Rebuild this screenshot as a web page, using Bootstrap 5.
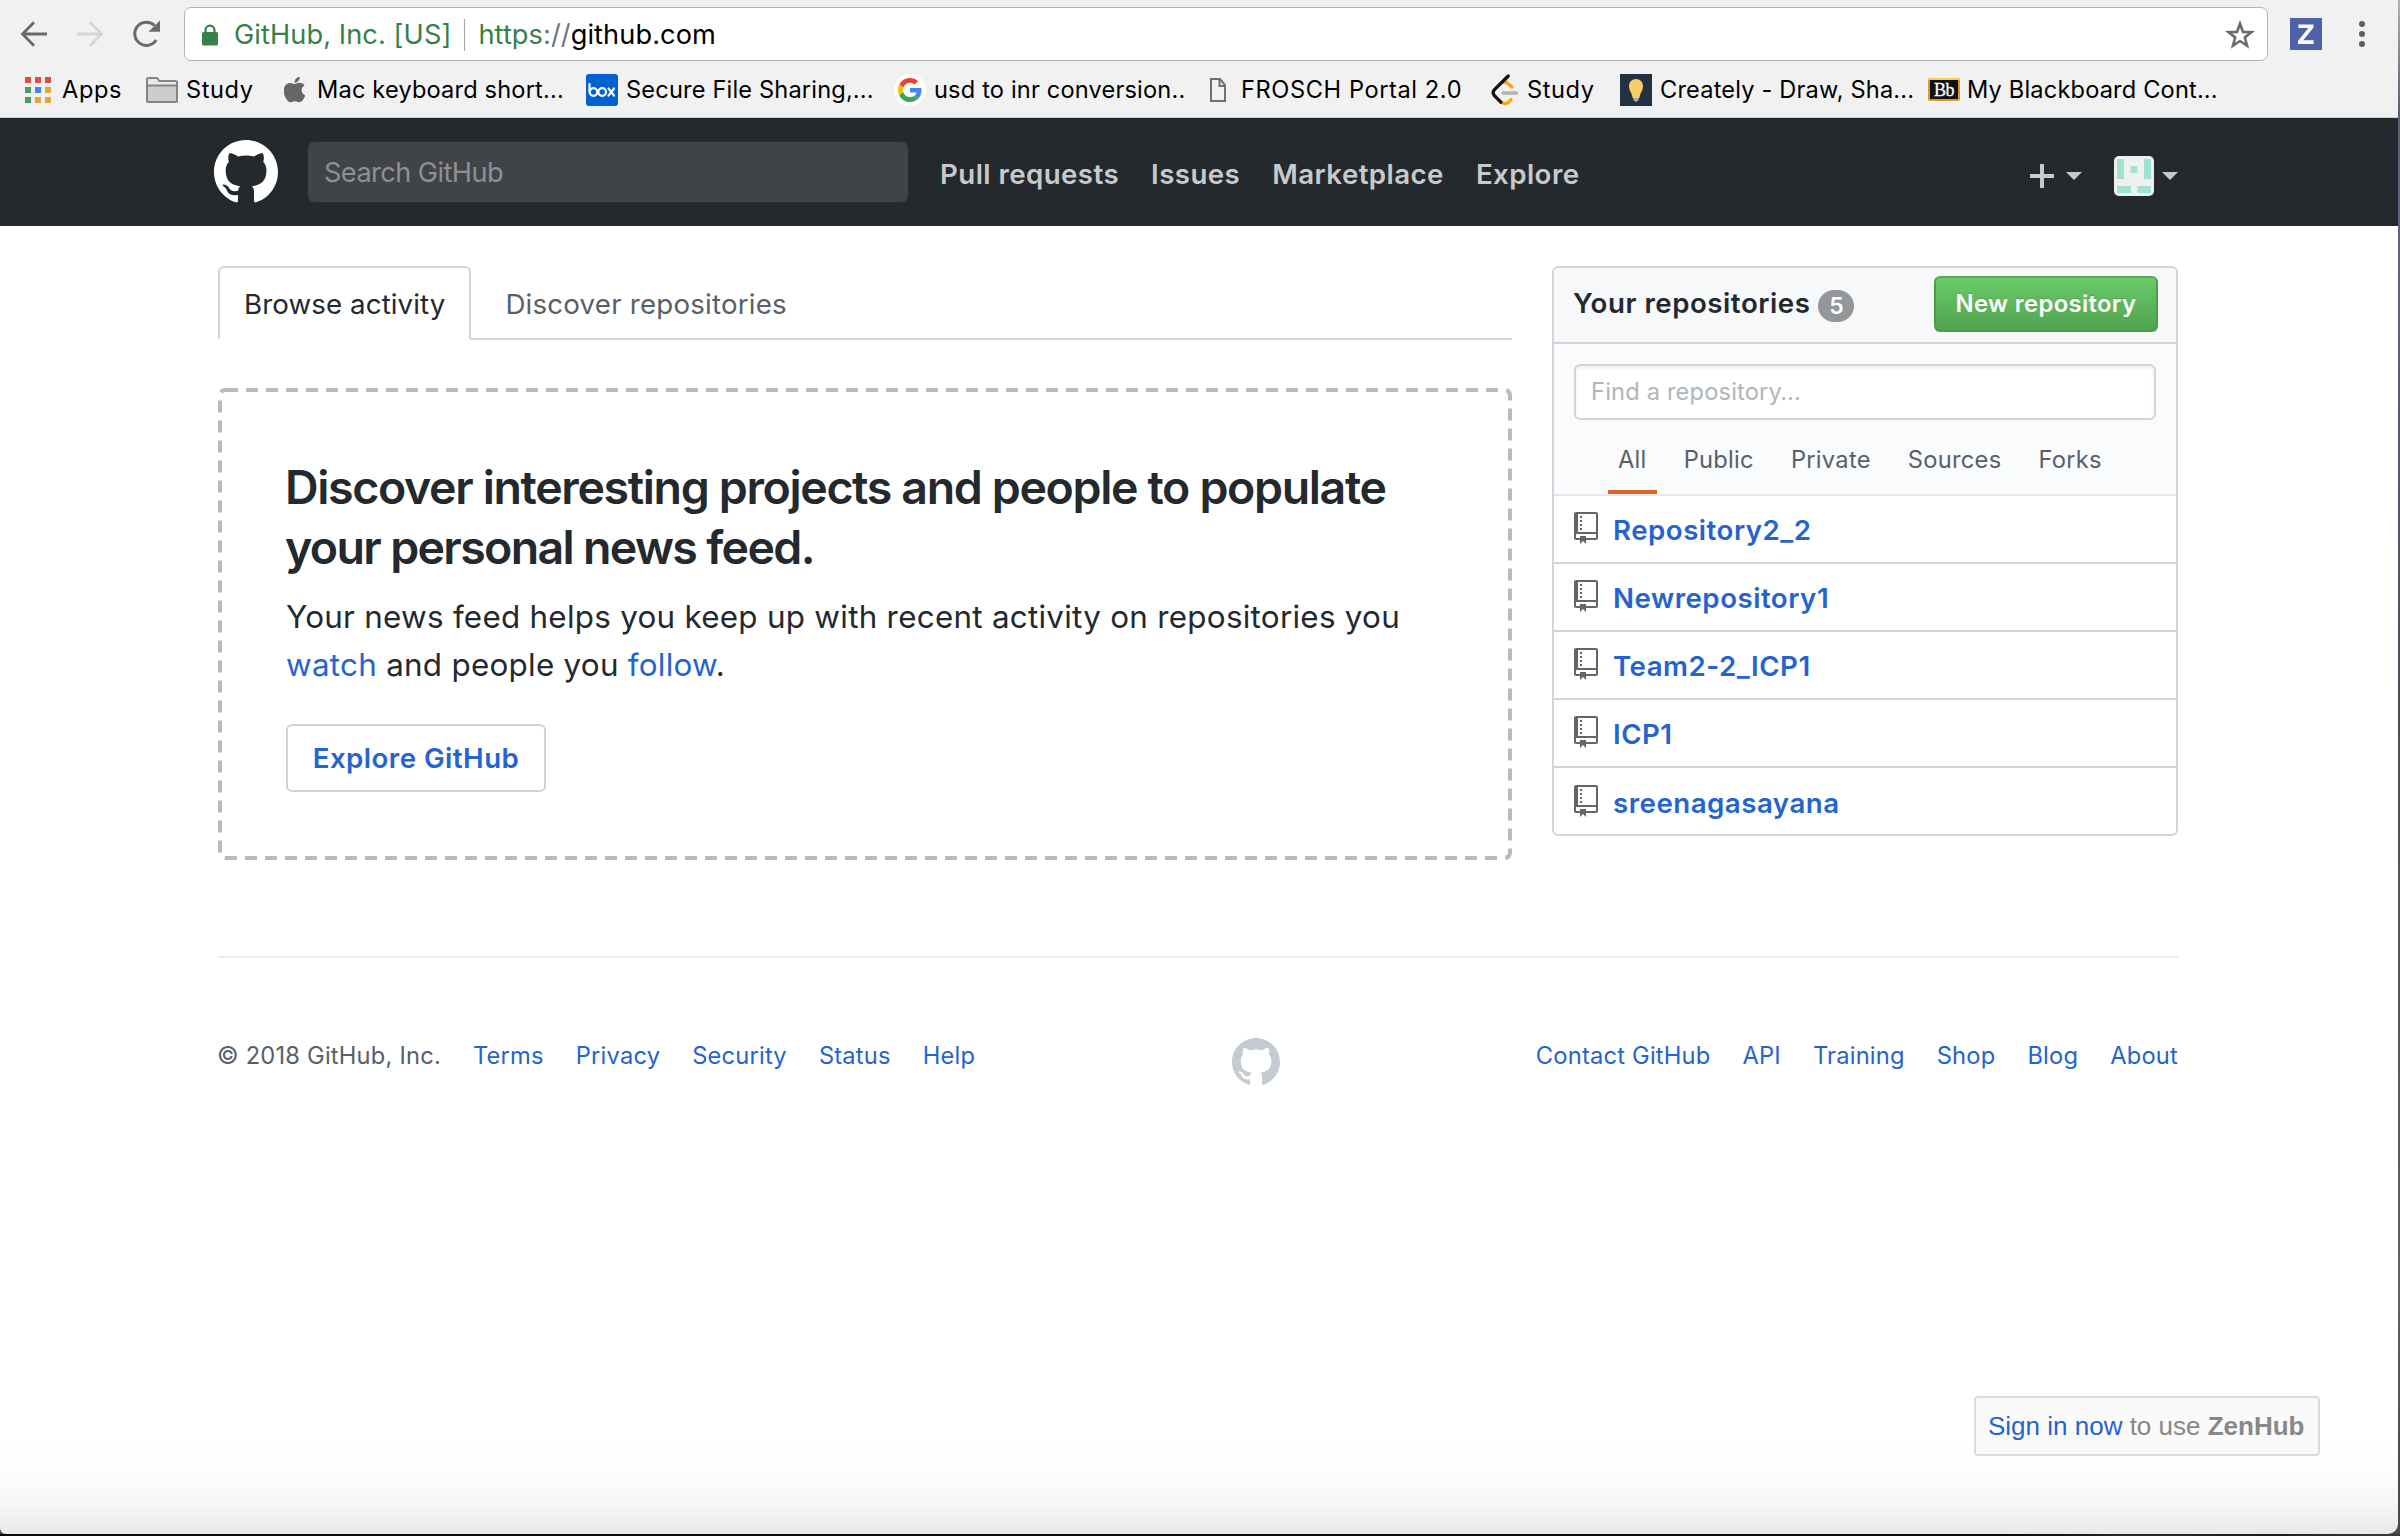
<!DOCTYPE html>
<html lang="en">
<head>
<meta charset="utf-8">
<title>GitHub</title>
<link href="https://cdn.jsdelivr.net/npm/bootstrap@5.3.0/dist/css/bootstrap.min.css" rel="stylesheet">
<script src="https://cdn.jsdelivr.net/npm/bootstrap@5.3.0/dist/js/bootstrap.bundle.min.js"></script>
<style>
html { font-size: 16px; }
body { width: 2400px; height: 1536px; overflow: hidden; background: linear-gradient(#aab3ba 0, #56606f 110px, #5c6684 230px, #4a4f5c 700px, #66605a 1300px, #4a4a4b 1480px); font-family: Inter, "Liberation Sans", sans-serif; font-size: 27.7px; line-height: 1.5; color: #24292e; }
a { color: #2563d1; text-decoration: none; }
svg { display: block; flex: none; }
.window { width: 2398px; height: 1534px; background: #fff linear-gradient(#fff 1440px, #fdfdfd 1470px, #f6f6f6 1505px, #e9e9e9 1534px); border-radius: 0 0 10px 6px; overflow: hidden; position: relative; }
.under-edge { height: 2px; background: linear-gradient(90deg, #0b0b0b 2000px, #17181b 2070px, #2e241a 2120px, #241e18 2280px, #3a3a3c 2390px); }

/* browser toolbar */
.chrome-bar { height: 118px; background: #f1f1f1; border-bottom: 1px solid #c4cfcc; }
.toolbar-row { height: 68px; padding-left: 20px; }
.btn-reload { margin: 0 22px 0 2px; }
.omnibox { width: 2084px; height: 54px; background: #fff; border: 1px solid #b4b4b4; border-radius: 7px; padding: 2px 12px 0 17px; font-size: 27.2px; letter-spacing: .08px; }
.url-sep { width: 1px; height: 32px; background: #a5a5a5; margin: 0 13px; }
.secure { color: #378047; }
.ext { margin-left: 22px; }
.dots { margin-left: 36px; }
.bookmarks { display: grid; grid-template-columns: 121px 138px 302px 308px 316px 281px 129px 308px auto; padding-left: 25px; height: 43px; font-size: 23.6px; letter-spacing: .17px; color: #000; white-space: nowrap; }
.bookmarks > div { display: flex; align-items: center; }
.bookmarks svg { margin-right: 8px; }
.bookmarks span { padding-top: 1px; }
.bookmarks .bm-wide { letter-spacing: .6px; margin-left: 1px; }
.bookmarks .bm-short { letter-spacing: .6px; }

/* site header */
.site-head { height: 108px; background: #24292e; padding-left: 214px; padding-right: 220px; }
.search-box { width: 600px; height: 60px; margin-left: 30px; border: 0; border-radius: 6px; background: #404448; padding: 0 16px; font-size: 27.2px; letter-spacing: -.58px; color: #fff; box-shadow: none; }
.search-box::placeholder { color: #8e9093; opacity: 1; }
.head-nav { margin-left: 32px; gap: 32px; font-weight: 600; letter-spacing: .42px; color: #c8c9cb; padding-top: 5px; }
.head-nav a { color: inherit; }
.tri { width: 0; height: 0; border: 8px solid transparent; border-bottom: 0; border-top-color: #c5c7c9; }
.head-tools { padding-top: 8px; }
.tri.t1 { margin: 0 32px 0 12px; }
.tri.t2 { margin-left: 8px; }

/* page body */
.page-col { width: 1960px; margin: 40px 0 0 218px; }
.feed { width: 1294px; }
.nav-tabs.feed-tabs { height: 74px; border-bottom: 2px solid #d1d5da; letter-spacing: .2px; }
.feed-tabs .nav-link { height: 74px; border-width: 2px; border-radius: 6px 6px 0 0; margin-bottom: -2px; padding: 0 24px; line-height: 73px; color: #586069; }
.feed-tabs .nav-link.active { border-color: #d1d5da; border-bottom-color: #fff; color: #24292e; letter-spacing: .1px; }
.feed-tabs .nav-link:not(.active) { padding-left: 32px; border-color: transparent; }
.blankslate { width: 1294px; height: 472px; margin-top: 48px; padding: 69px 60px 0 69px; position: relative; }
.blankslate > svg { position: absolute; left: 0; top: 0; }
.blankslate h1 { font-size: 46.5px; font-weight: 600; line-height: 60px; letter-spacing: -1.36px; margin: 0 0 16px -2px; white-space: nowrap; }
.blankslate h1 .l2 { letter-spacing: -1.66px; }
.blankslate p { font-size: 31.4px; line-height: 48px; letter-spacing: .26px; margin: 0 0 35px -1px; white-space: nowrap; }
.btn.btn-explore { width: 260px; height: 68px; margin-left: -1px; padding: 0; border: 2px solid #d0d1d3; border-radius: 6px; background: #fff; color: #2563d1; font-size: 27.7px; font-weight: 600; letter-spacing: .45px; line-height: 64px; }

/* repository list */
.card.repo-box { width: 626px; border: 2px solid #d1d5da; border-radius: 6px; overflow: hidden; }
.repo-box .card-header { height: 76px; background: #f6f8fa; border-bottom: 2px solid #d1d5da; padding: 0 18px 2px 19px; }
.repo-title { font-weight: 600; letter-spacing: .52px; }
.badge.count { width: 36px; height: 32px; border-radius: 16px; background: #93979c; font-size: 23px; font-weight: 600; padding: 4px 0 0; line-height: 24px; margin: 4px 0 0 8px; }
.btn.btn-new { width: 224px; height: 56px; padding: 0; border: 2px solid #4b9c4c; border-top-color: #58ab55; border-radius: 6px; background: linear-gradient(#69cb67, #51a351); color: #fff; font-size: 23.8px; font-weight: 600; letter-spacing: .35px; line-height: 51px; text-shadow: 0 -1px 0 rgba(0,0,0,.15); }
.filters { height: 152px; background: #fafbfd; border-bottom: 2px solid #e5e8eb; padding: 20px 20px 0; font-size: 23.7px; }
.find-box { height: 56px; border: 2px solid #d1d5da; border-radius: 6px; padding: 0 15px 2px; font-size: 23.7px; letter-spacing: .15px; box-shadow: inset 0 2px 4px rgba(27,31,35,.075); }
.find-box::placeholder { color: #b0b5ba; opacity: 1; }
.filter-tabs { gap: 17px; margin: 14px 0 0 34px; letter-spacing: .27px; color: #586069; }
.filter-tabs span { height: 60px; line-height: 51px; padding: 0 10px; }
.filter-tabs .on { border-bottom: 4px solid #d66a2a; }
.repo-box > .list-group { border-top: 0; }
.repo-box .list-group-item { height: 68px; padding: 0 20px 2px; border: 0; border-bottom: 2px solid #d1d5da; background: #fff; font-weight: 600; letter-spacing: .48px; }
.repo-box .list-group-item:last-child { height: 66px; padding-bottom: 0; border-bottom: 0; }
.repo-box .list-group-item svg { margin-right: 15px; }
.repo-box .list-group-item a { padding-top: 5px; }

/* footer */
.site-foot { margin-top: 96px; border-top: 2px solid #eaecef; padding-top: 76px; font-size: 23.7px; line-height: 44px; letter-spacing: .2px; color: #586069; }
.foot-links { gap: 32px; }
.foot-links.lead-col { width: 1015px; margin-left: -1px; }
.zen { position: absolute; left: 1974px; top: 1396px; width: 346px; height: 60px; border: 2px solid #dcdcdc; border-radius: 4px; background: #fafafa; font: 26px/57px "Liberation Sans", sans-serif; color: #888; padding-left: 12px; white-space: nowrap; }
</style>
</head>
<body>
<div class="window">
  <div class="chrome-bar">
    <div class="toolbar-row d-flex align-items-center">
      <svg width="28" height="28" viewBox="0 0 28 28" fill="none" stroke="#6a6a6a" stroke-width="2.8"><path d="M27 14H3M14 2.200L2.500 14 14 25.800"/></svg>
      <svg class="ms-4 me-4" width="34" height="28" viewBox="-3 0 34 28" fill="none" stroke="#d6d6d6" stroke-width="2.800"><path d="M2 14h24M15 2.200L26.500 14 15 25.800"/></svg>
      <svg class="btn-reload" width="30" height="28" viewBox="0 0 30 28"><path d="M24.200 20A11.600 11.600 0 1 1 22.500 5.500" fill="none" stroke="#6a6a6a" stroke-width="3"/><path d="M28 .5v11.300H16.500z" fill="#6a6a6a"/></svg>
      <div class="omnibox d-flex align-items-center">
        <svg width="16" height="22" viewBox="0 0 16 22"><path d="M3.500 9V6.200a4.500 4.500 0 0 1 9 0V9" fill="none" stroke="#378047" stroke-width="2.200"/><rect y="8" width="16" height="13.500" rx="1.500" fill="#378047"/></svg>
        <span class="secure ms-3">GitHub, Inc. [US]</span>
        <div class="url-sep"></div>
        <span><span class="secure">https</span><span class="text-secondary">://</span><span class="text-black">github.com</span></span>
        <svg class="ms-auto" width="30" height="30" viewBox="0 0 30 30"><path d="M15 3.800l3 8.100 8.400.3-6.600 5.300 2.300 8.300-7.100-4.800-7.100 4.800 2.300-8.300-6.600-5.300 8.400-.3z" fill="none" stroke="#6a6a6a" stroke-width="2.600"/></svg>
      </div>
      <svg class="ext" width="32" height="32" viewBox="0 0 32 32"><rect width="32" height="32" fill="#4f62a8"/><path d="M8.500 6.500h15v3L13.200 22.300h10.500V26H8v-3L18.400 10H8.500z" fill="#fff"/></svg>
      <svg class="dots" width="8" height="28" viewBox="0 0 8 28" fill="#5f5f5f"><circle cx="4" cy="4" r="3"/><circle cx="4" cy="14" r="3"/><circle cx="4" cy="24" r="3"/></svg>
    </div>
    <div class="bookmarks">
      <div><svg width="26" height="26" viewBox="0 0 26 26" style="margin-right:11px"><path fill="#e34a40" d="M0 0h6v6H0zM10 0h6v6h-6zM20 0h6v6h-6z"/><path fill="#4f9d5d" d="M0 10h6v6H0zM0 20h6v6H0z"/><path fill="#3b8bea" d="M10 10h6v6h-6z"/><path fill="#e6a43a" d="M20 10h6v6h-6zM10 20h6v6h-6zM20 20h6v6h-6z"/></svg><span class="bm-short">Apps</span></div>
      <div><svg width="32" height="26" viewBox="0 0 32 26"><path d="M1 24V2.500Q1 1 2.500 1h8q1 0 1.500 1l1.200 2H29.500Q31 4 31 5.500V24q0 1-1 1H2q-1 0-1-1z" fill="#e8e8e8" stroke="#858585" stroke-width="2"/><path d="M2 9h28v15H2z" fill="#cdcdcd"/><path d="M1 8.500h30" stroke="#858585" stroke-width="2"/></svg><span class="bm-short">Study</span></div>
      <div><svg width="22" height="27" viewBox="10 20 384 472" style="margin-right:11px" fill="#666"><path d="M318.700 268.700c-.2-36.700 16.400-64.400 50-84.800-18.800-26.900-47.200-41.700-84.700-44.600-35.500-2.800-74.300 20.700-88.500 20.700-15 0-49.400-19.700-76.400-19.700C63.300 141.200 4 184.800 4 273.500q0 39.300 14.400 81.200c12.800 36.700 59 126.700 107.200 125.200 25.200-.6 43-17.900 75.800-17.900 31.800 0 48.300 17.900 76.400 17.900 48.600-.7 90.400-82.500 102.600-119.300-65.200-30.700-61.700-90-61.700-91.900zm-56.600-164.200c27.300-32.400 24.800-61.900 24-72.500-24.100 1.400-52 16.400-67.900 34.900-17.500 19.800-27.800 44.300-25.600 71.900 26.100 2 49.900-11.400 69.500-34.300z"/></svg><span>Mac keyboard short...</span></div>
      <div><svg width="32" height="32" viewBox="0 0 32 32"><rect width="32" height="32" rx="3" fill="#0061d5"/><g fill="none" stroke="#fff" stroke-width="2.200" stroke-linecap="round"><path d="M3.500 10v8"/><circle cx="7.500" cy="18" r="3.800"/><circle cx="16.200" cy="18" r="3.800"/><path d="M22.500 14.500l5.500 7.200M28 14.500l-5.500 7.200"/></g></svg><span>Secure File Sharing,...</span></div>
      <div><svg width="32" height="32" viewBox="0 0 64 64"><circle cx="32" cy="32" r="32" fill="#fff"/><g transform="translate(8 8)"><path fill="#EA4335" d="M24 9.500c3.540 0 6.710 1.220 9.210 3.600l6.850-6.850C35.900 2.380 30.470 0 24 0 14.620 0 6.510 5.380 2.560 13.220l7.980 6.190C12.430 13.720 17.740 9.500 24 9.500z"/><path fill="#4285F4" d="M46.980 24.550c0-1.570-.15-3.090-.38-4.550H24v9.020h12.940c-.58 2.960-2.260 5.480-4.780 7.180l7.730 6c4.510-4.180 7.090-10.360 7.090-17.650z"/><path fill="#FBBC05" d="M10.530 28.590c-.48-1.450-.76-2.990-.76-4.590s.27-3.140.76-4.590l-7.980-6.190C.92 16.460 0 20.120 0 24c0 3.880.92 7.540 2.560 10.780l7.970-6.190z"/><path fill="#34A853" d="M24 48c6.480 0 11.930-2.130 15.890-5.810l-7.730-6c-2.150 1.450-4.920 2.300-8.160 2.300-6.260 0-11.570-4.220-13.470-9.910l-7.980 6.190C6.510 42.620 14.620 48 24 48z"/></g></svg><span>usd to inr conversion..</span></div>
      <div><svg width="16" height="24" viewBox="0 0 16 24" style="margin-right:14px" fill="none" stroke="#707070" stroke-width="2"><path d="M1 1h9l5 6v16H1zM9.500 1v7H15"/></svg><span class="bm-wide">FROSCH Portal 2.0</span></div>
      <div><svg width="28" height="32" viewBox="0 0 28 32" fill="none" stroke-linecap="round" stroke-width="3.300"><path d="M13 8.500l2-.8 6 5.300M10.500 28q4.500 4.200 9.500-2.500" stroke="#ffa116"/><path d="M17.200 2L3.500 15.500q-2.500 3-.3 5.800l6.600 6.900" stroke="#111"/><path d="M12 19h13.500" stroke="#b3b3b3"/></svg><span class="bm-short">Study</span></div>
      <div><svg width="32" height="32" viewBox="0 0 32 32"><rect width="32" height="32" fill="#233243"/><path d="M16 5c-4 0-7 3-7 7.200 0 4.500 3.200 6.800 3.600 11.800h6.800c.4-5 3.600-7.300 3.600-11.800C23 8 20 5 16 5z" fill="#f7cf63"/><path d="M13 24h6l-1 3h-1l-1 1.500-1-1.500h-1z" fill="#a7a9a4"/></svg><span>Creately - Draw, Sha...</span></div>
      <div><svg width="32" height="24" viewBox="0 0 32 24" style="margin-right:7px"><rect x="1" y="1" width="30" height="21" rx="1" fill="#111" stroke="#d99a28" stroke-width="2"/><path d="M1 1h30" stroke="#f3cf4a" stroke-width="2"/><text x="16" y="17.500" text-anchor="middle" font-family="Liberation Serif, serif" font-size="18" letter-spacing="-.5" fill="#fff" stroke="#fff" stroke-width=".3">Bb</text></svg><span>My Blackboard Cont...</span></div>
    </div>
  </div>

  <header class="site-head d-flex align-items-center">
    <svg width="64" height="64" viewBox="0 0 16 16" fill="#fff"><path id="octocat" d="M8 0C3.580 0 0 3.580 0 8c0 3.540 2.290 6.530 5.470 7.590.4.070.55-.17.55-.38 0-.19-.01-.82-.01-1.490-2.010.37-2.530-.49-2.690-.94-.09-.23-.48-.94-.82-1.130-.28-.15-.68-.52-.01-.53.63-.01 1.080.58 1.230.82.72 1.210 1.870.87 2.330.66.070-.52.28-.87.51-1.070-1.780-.2-3.640-.89-3.640-3.950 0-.87.31-1.590.82-2.150-.08-.2-.36-1.020.08-2.120 0 0 .67-.21 2.200.82.64-.18 1.320-.27 2-.27.68 0 1.360.09 2 .27 1.530-1.040 2.200-.82 2.200-.82.44 1.100.16 1.920.08 2.120.51.56.82 1.270.82 2.150 0 3.070-1.870 3.750-3.650 3.950.29.25.54.73.54 1.480 0 1.070-.01 1.930-.01 2.200 0 .21.15.46.55.38A8.013 8.013 0 0 0 16 8c0-4.420-3.580-8-8-8z"/></svg>
    <input class="form-control search-box flex-shrink-0" type="text" placeholder="Search GitHub">
    <nav class="head-nav d-flex"><a href="#">Pull requests</a><a href="#">Issues</a><a href="#">Marketplace</a><a href="#">Explore</a></nav>
    <div class="head-tools d-flex align-items-center ms-auto">
      <svg width="24" height="32" viewBox="0 0 12 16" fill="#c8c9cb"><path d="M12 9H7v5H5V9H0V7h5V2h2v5h5z"/></svg>
      <div class="tri t1"></div>
      <svg width="40" height="40" viewBox="0 0 40 40"><rect width="40" height="40" rx="5" fill="#f0f0f0"/><path d="M3 3h7v20H3zM16.500 10h7v7h-7zM30 3h7v20h-7zM3 30h14v7H3zM23.500 30H37v7H23.500z" fill="#a0e3cf"/></svg>
      <div class="tri t2"></div>
    </div>
  </header>

  <main class="page-col">
    <div class="d-flex justify-content-between align-items-start">
      <section class="feed">
        <ul class="nav nav-tabs feed-tabs">
          <li class="nav-item"><a class="nav-link active" href="#">Browse activity</a></li>
          <li class="nav-item"><a class="nav-link" href="#">Discover repositories</a></li>
        </ul>
        <div class="blankslate">
          <svg width="1294" height="472" viewBox="0 0 1294 472"><path d="M8 2H1286Q1292 2 1292 8V464Q1292 470 1286 470H8Q2 470 2 464V8Q2 2 8 2" fill="none" stroke="#bababa" stroke-width="4" stroke-dasharray="12 8"/></svg>
          <h1>Discover interesting projects and people to populate<br><span class="l2">your personal news feed.</span></h1>
          <p>Your news feed helps you keep up with recent activity on repositories you<br><a href="#">watch</a> and people you <a href="#">follow</a>.</p>
          <a class="btn btn-explore" href="#">Explore GitHub</a>
        </div>
      </section>
      <aside class="card repo-box">
        <div class="card-header d-flex align-items-center">
          <span class="repo-title">Your repositories</span><span class="badge count">5</span>
          <a class="btn btn-new ms-auto" href="#">New repository</a>
        </div>
        <div class="filters">
          <input class="form-control find-box" type="text" placeholder="Find a repository…">
          <div class="filter-tabs d-flex"><span class="on">All</span><span>Public</span><span>Private</span><span>Sources</span><span>Forks</span></div>
        </div>
        <div class="list-group list-group-flush">
          <div class="list-group-item d-flex align-items-center"><svg width="24" height="32" viewBox="0 0 12 16" fill="#666"><path id="repo" d="M4 9H3V8h1v1zm0-3H3v1h1V6zm0-2H3v1h1V4zm0-2H3v1h1V2zm8-1v12c0 .55-.45 1-1 1H6v2l-1.500-1.500L3 16v-2H1c-.55 0-1-.45-1-1V1c0-.55.45-1 1-1h10c.55 0 1 .45 1 1zm-1 10H1v2h2v-1h3v1h5v-2zm0-10H2v9h9V1z"/></svg><a href="#">Repository2_2</a></div>
          <div class="list-group-item d-flex align-items-center"><svg width="24" height="32" viewBox="0 0 12 16" fill="#666"><use href="#repo"/></svg><a href="#">Newrepository1</a></div>
          <div class="list-group-item d-flex align-items-center"><svg width="24" height="32" viewBox="0 0 12 16" fill="#666"><use href="#repo"/></svg><a href="#">Team2-2_ICP1</a></div>
          <div class="list-group-item d-flex align-items-center"><svg width="24" height="32" viewBox="0 0 12 16" fill="#666"><use href="#repo"/></svg><a href="#">ICP1</a></div>
          <div class="list-group-item d-flex align-items-center"><svg width="24" height="32" viewBox="0 0 12 16" fill="#666"><use href="#repo"/></svg><a href="#">sreenagasayana</a></div>
        </div>
      </aside>
    </div>
    <footer class="site-foot d-flex align-items-start">
      <div class="foot-links lead-col d-flex"><span>© 2018 GitHub, Inc.</span><a href="#">Terms</a><a href="#">Privacy</a><a href="#">Security</a><a href="#">Status</a><a href="#">Help</a></div>
      <svg width="48" height="48" viewBox="0 0 16 16" fill="#c6cbd1" class="mt-1"><use href="#octocat"/></svg>
      <div class="foot-links d-flex ms-auto"><a href="#">Contact GitHub</a><a href="#">API</a><a href="#">Training</a><a href="#">Shop</a><a href="#">Blog</a><a href="#">About</a></div>
    </footer>
  </main>

  <div class="zen"><a href="#">Sign in now</a> to use <b>ZenHub</b></div>
</div>
<div class="under-edge"></div>
</body>
</html>
